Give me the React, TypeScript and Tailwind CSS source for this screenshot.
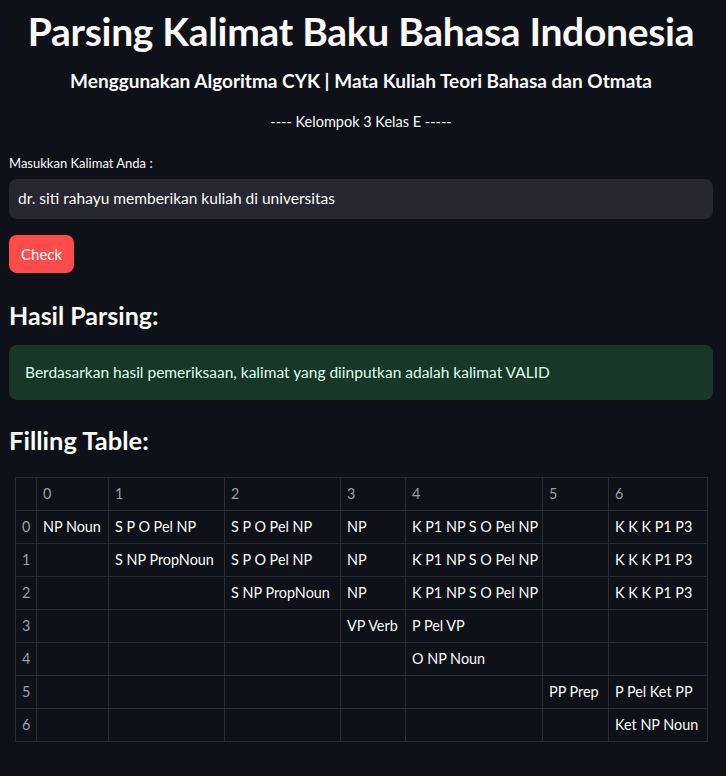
import React from "react";

const cols = ["0", "1", "2", "3", "4", "5", "6"];
const widths = ["w-[21px]", "w-[72px]", "w-[116px]", "w-[116px]", "w-[65px]", "w-[137px]", "w-[66px]", "w-[99px]"];

const rows: string[][] = [
  ["NP Noun", "S P O Pel NP", "S P O Pel NP", "NP", "K P1 NP S O Pel NP", "", "K K K P1 P3"],
  ["", "S NP PropNoun", "S P O Pel NP", "NP", "K P1 NP S O Pel NP", "", "K K K P1 P3"],
  ["", "", "S NP PropNoun", "NP", "K P1 NP S O Pel NP", "", "K K K P1 P3"],
  ["", "", "", "VP Verb", "P Pel VP", "", ""],
  ["", "", "", "", "O NP Noun", "", ""],
  ["", "", "", "", "", "PP Prep", "P Pel Ket PP"],
  ["", "", "", "", "", "", "Ket NP Noun"],
];

function FillingTable() {
  return (
    <table className="ml-[6px] w-[692px] table-fixed border-collapse border border-[#2a2c33] text-[14.4px]">
      <colgroup>
        {widths.map((w, i) => (
          <col key={i} className={w} />
        ))}
      </colgroup>
      <thead>
        <tr className="h-[33px]">
          <th className="border border-[#2a2c33]" />
          {cols.map((c) => (
            <th key={c} className="border border-[#2a2c33] px-[6px] text-left font-normal text-[#9c9ea3]">
              {c}
            </th>
          ))}
        </tr>
      </thead>
      <tbody>
        {rows.map((r, i) => (
          <tr key={i} className="h-[33px]">
            <td className="border border-[#2a2c33] px-[6px] text-[#9c9ea3]">{i}</td>
            {r.map((cell, j) => (
              <td key={j} className="whitespace-nowrap border border-[#2a2c33] px-[6px] text-[#fafafa]">
                {cell}
              </td>
            ))}
          </tr>
        ))}
      </tbody>
    </table>
  );
}

export default function App() {
  return (
    <div className="min-h-[776px] w-full bg-[#0e1117] pl-[9px] pr-[13px] text-[#fafafa] font-['Lato','Liberation_Sans',sans-serif]">
      <h1 className="pt-[9px] text-center text-[39px] font-bold leading-[44px] tracking-[-0.3px]">
        Parsing Kalimat Baku Bahasa Indonesia
      </h1>
      <h3 className="mt-[16px] text-center text-[19px] font-bold leading-[24px]">
        Menggunakan Algoritma CYK | Mata Kuliah Teori Bahasa dan Otmata
      </h3>
      <p className="mt-[19px] text-center text-[14.5px] leading-[20px]">---- Kelompok 3 Kelas E -----</p>

      <label className="mt-[22px] block text-[13px] leading-[18px]">Masukkan Kalimat Anda :</label>
      <div className="mt-[7px] flex h-[40px] items-center rounded-[8px] bg-[#262730] px-[9px] text-[15.5px]">
        dr. siti rahayu memberikan kuliah di universitas
      </div>
      <button className="mt-[16px] flex h-[38px] items-center rounded-[8px] bg-[#ff4b4b] px-[12px] text-[15px] text-white">
        Check
      </button>

      <h2 className="mt-[26px] text-[25px] font-bold leading-[32px]">Hasil Parsing:</h2>
      <div className="mt-[14px] flex h-[55px] items-center rounded-[8px] bg-[#173828] px-[16px] text-[15.5px] text-[#dffde9]">
        Berdasarkan hasil pemeriksaan, kalimat yang diinputkan adalah kalimat VALID
      </div>

      <h2 className="mt-[24px] text-[25.5px] font-bold leading-[32px]">Filling Table:</h2>
      <div className="mt-[21px]">
        <FillingTable />
      </div>
    </div>
  );
}
